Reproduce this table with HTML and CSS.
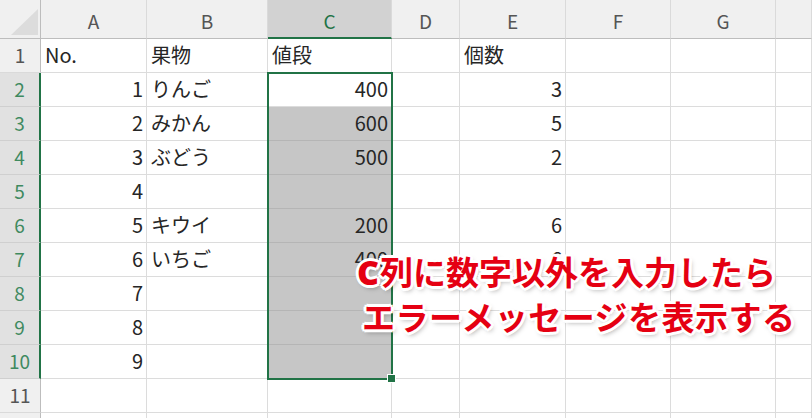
FILE: index.html
```html
<!DOCTYPE html>
<html lang="ja">
<head>
<meta charset="utf-8">
<link rel="stylesheet" href="styles.css">
</head>
<body>
<div class="sheet">
  <div class="grid">
    <div class="hd corner"><svg class="tri" width="28" height="27" viewBox="0 0 28 27"><polygon points="27,0 27,26 0,26" fill="#dcdcdc"/></svg></div>
    <div class="hd">A</div><div class="hd">B</div><div class="hd csel">C</div><div class="hd">D</div><div class="hd">E</div><div class="hd">F</div><div class="hd">G</div><div class="hd"></div>

    <div class="rh">1</div><div class="c">No.</div><div class="c">果物</div><div class="c">値段</div><div class="c"></div><div class="c">個数</div><div class="c"></div><div class="c"></div><div class="c"></div>

    <div class="rh rsel">2</div><div class="c num">1</div><div class="c">りんご</div><div class="c num">400</div><div class="c"></div><div class="c num">3</div><div class="c"></div><div class="c"></div><div class="c"></div>
    <div class="rh rsel">3</div><div class="c num">2</div><div class="c">みかん</div><div class="c num sel">600</div><div class="c"></div><div class="c num">5</div><div class="c"></div><div class="c"></div><div class="c"></div>
    <div class="rh rsel">4</div><div class="c num">3</div><div class="c">ぶどう</div><div class="c num sel">500</div><div class="c"></div><div class="c num">2</div><div class="c"></div><div class="c"></div><div class="c"></div>
    <div class="rh rsel">5</div><div class="c num">4</div><div class="c"></div><div class="c num sel"></div><div class="c"></div><div class="c"></div><div class="c"></div><div class="c"></div><div class="c"></div>
    <div class="rh rsel">6</div><div class="c num">5</div><div class="c">キウイ</div><div class="c num sel">200</div><div class="c"></div><div class="c num">6</div><div class="c"></div><div class="c"></div><div class="c"></div>
    <div class="rh rsel">7</div><div class="c num">6</div><div class="c">いちご</div><div class="c num sel">400</div><div class="c"></div><div class="c num">6</div><div class="c"></div><div class="c"></div><div class="c"></div>
    <div class="rh rsel">8</div><div class="c num">7</div><div class="c"></div><div class="c num sel"></div><div class="c"></div><div class="c"></div><div class="c"></div><div class="c"></div><div class="c"></div>
    <div class="rh rsel">9</div><div class="c num">8</div><div class="c"></div><div class="c num sel"></div><div class="c"></div><div class="c"></div><div class="c"></div><div class="c"></div><div class="c"></div>
    <div class="rh rsel">10</div><div class="c num">9</div><div class="c"></div><div class="c num sel"></div><div class="c"></div><div class="c"></div><div class="c"></div><div class="c"></div><div class="c"></div>
    <div class="rh">11</div><div class="c"></div><div class="c"></div><div class="c"></div><div class="c"></div><div class="c"></div><div class="c"></div><div class="c"></div><div class="c"></div>
    <div class="rh"></div><div class="c"></div><div class="c"></div><div class="c"></div><div class="c"></div><div class="c"></div><div class="c"></div><div class="c"></div><div class="c"></div>

    <div class="selection"><div class="handle"></div></div>
  </div>

  <div class="note">
    <div class="line"><b>C</b>列に数字以外を入力したら</div>
    <div class="line">エラーメッセージを表示する</div>
  </div>
</div>
</body>
</html>
```

FILE: styles.css
```css
html, body {
  margin: 0;
  padding: 0;
  background: #ffffff;
}
body {
  width: 812px;
  height: 418px;
  overflow: hidden;
  font-family: "Noto Sans CJK JP", "Noto Sans", sans-serif;
}
.sheet {
  position: relative;
  width: 812px;
  height: 418px;
  overflow: hidden;
}
.grid {
  position: relative;
  display: grid;
  grid-template-columns: 41px 106px 121px 124px 68px 106px 105px 105px 1fr;
  grid-template-rows: 39px repeat(12, 34px);
  width: 812px;
}
.grid > div {
  box-sizing: border-box;
}
.hd {
  background: #f0f0f0;
  border-right: 1px solid #dadada;
  border-bottom: 1px solid #bdbdbd;
  color: #555555;
  font-size: 19px;
  line-height: 20px;
  display: flex;
  align-items: flex-end;
  justify-content: center;
  padding-bottom: 7px;
}
.corner {
  position: relative;
  border-right: 1px solid #bdbdbd;
}
.tri {
  position: absolute;
  left: 11px;
  top: 9px;
}
.csel {
  background: #d2d2d2;
  color: #217346;
  border-bottom: 2px solid #217346;
  padding-bottom: 6px;
}
.rh {
  background: #f0f0f0;
  border-right: 1px solid #bdbdbd;
  border-bottom: 1px solid #dadada;
  color: #555555;
  font-size: 19px;
  line-height: 20px;
  display: flex;
  align-items: flex-end;
  justify-content: center;
  padding-bottom: 7px;
}
.rsel {
  background: #e1e1e1;
  color: #3f8a5f;
  border-right: 2px solid #217346;
  border-bottom: 1px solid #cfcfcf;
}
.c {
  border-right: 1px solid #dcdcdc;
  border-bottom: 1px solid #dcdcdc;
  font-size: 20px;
  line-height: 20px;
  color: #262626;
  display: flex;
  align-items: flex-end;
  padding: 0 4px 7px 4px;
  white-space: nowrap;
}
.num {
  justify-content: flex-end;
  padding-right: 3px;
}
.sel {
  background: #c6c6c6;
  border-bottom-color: #b5b5b5;
  border-right-color: #c6c6c6;
}
.selection {
  position: absolute;
  grid-column: 4 / 5;
  grid-row: 3 / 12;
  top: -1px;
  left: -1px;
  right: -1px;
  bottom: -1px;
  border: 2px solid #217346;
  z-index: 2;
  pointer-events: none;
}
.handle {
  position: absolute;
  right: -5px;
  bottom: -5px;
  width: 7px;
  height: 7px;
  background: #217346;
  border: 1px solid #ffffff;
}
.note {
  position: absolute;
  left: 357px;
  top: 249px;
  z-index: 5;
  font-size: 33px;
  line-height: 44px;
  font-weight: 700;
  color: #e50012;
  white-space: nowrap;
  text-shadow:
    -2px -2px 0 #fff, 2px -2px 0 #fff, -2px 2px 0 #fff, 2px 2px 0 #fff,
    0 -3px 0 #fff, 0 3px 0 #fff, -3px 0 0 #fff, 3px 0 0 #fff,
    2px 3px 5px rgba(0, 0, 0, 0.35);
}
.line b {
  font-weight: 900;
  font-family: "Open Sans", "Noto Sans", sans-serif;
  font-size: 34px;
  margin-right: 1px;
}
.line + .line {
  padding-left: 5px;
  letter-spacing: 0.5px;
}
```
